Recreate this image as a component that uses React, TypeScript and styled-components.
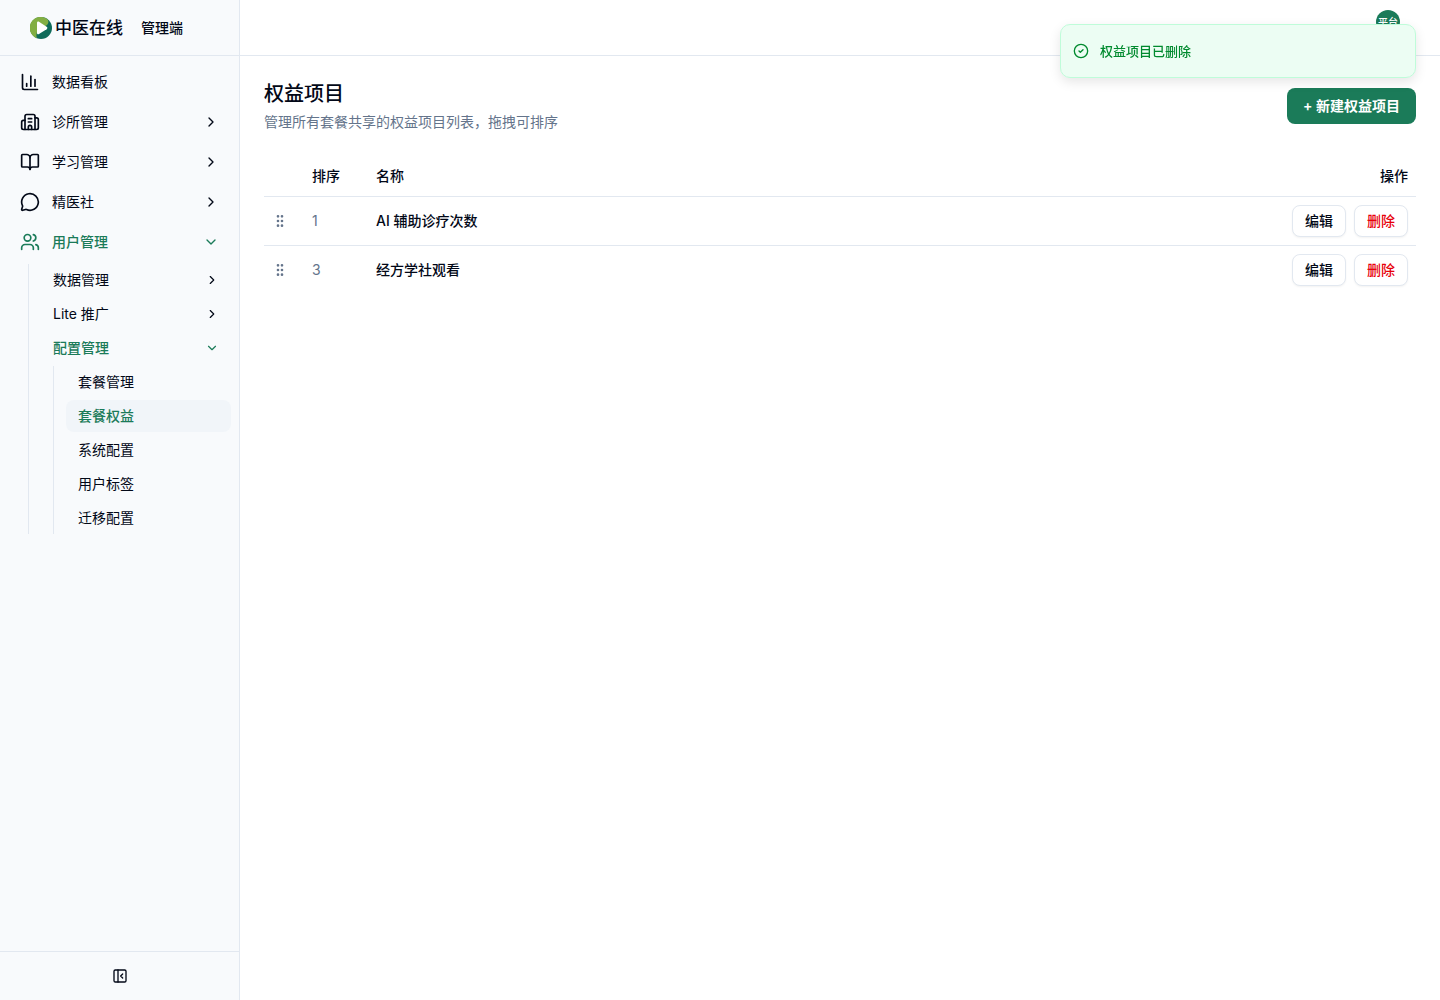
import React from "react";
import styled, { createGlobalStyle, css } from "styled-components";
import {
  BookOpen,
  Building2,
  ChartColumn,
  ChevronDown,
  ChevronRight,
  CircleCheck,
  GripVertical,
  MessageCircle,
  PanelLeftClose,
  Users,
} from "lucide-react";

const color = {
  text: "#020817",
  muted: "#64748b",
  border: "#e2e8f0",
  sidebar: "#f8fafc",
  active: "#f1f5f9",
  primary: "#1b7b59",
  danger: "#e7000b",
};

const GlobalStyle = createGlobalStyle`
  *, *::before, *::after { box-sizing: border-box; }
  body {
    margin: 0;
    background: #fff;
    color: ${color.text};
    font-family: Inter, "Noto Sans CJK SC", sans-serif;
    font-size: 14px;
    line-height: 20px;
    -webkit-font-smoothing: antialiased;
  }
  button { font: inherit; color: inherit; cursor: pointer; }
  a { color: inherit; text-decoration: none; }
  h1, p, ul { margin: 0; padding: 0; }
  ul { list-style: none; }
`;

const Shell = styled.div`
  display: flex;
  min-height: 100vh;
`;

const Sidebar = styled.aside`
  display: flex;
  flex-direction: column;
  flex: 0 0 240px;
  background: ${color.sidebar};
  border-right: 1px solid ${color.border};
`;

const Brand = styled.div`
  display: flex;
  align-items: center;
  gap: 18px;
  height: 56px;
  padding: 0 30px;
  border-bottom: 1px solid ${color.border};
  font-weight: 500;
`;

const Logo = styled.a`
  display: flex;
  align-items: center;
  gap: 3px;
  font-size: 17px;
  font-weight: 500;
`;

const Nav = styled.nav`
  flex: 1;
  padding: 8px;
`;

const Menu = styled.ul<{ $level: 1 | 2 | 3 }>`
  display: flex;
  flex-direction: column;
  gap: ${(p) => (p.$level === 1 ? 4 : 2)}px;
  ${(p) =>
    p.$level > 1 &&
    css`
      margin-top: ${p.$level === 2 ? 4 : 2}px;
      margin-left: ${p.$level === 2 ? 20 : 12}px;
      padding-left: 12px;
      border-left: 1px solid ${color.border};
    `}
`;

const itemStyle = css<{ $top?: boolean; $active?: boolean }>`
  display: flex;
  align-items: center;
  gap: 12px;
  width: 100%;
  height: ${(p) => (p.$top ? 36 : 32)}px;
  padding: 0 12px;
  border: 0;
  border-radius: 8px;
  background: none;
  text-align: left;
  font-weight: ${(p) => (p.$active ? 500 : 400)};
  color: ${(p) => (p.$active ? color.primary : color.text)};
`;

const MenuButton = styled.button`
  ${itemStyle}
`;

const MenuLink = styled.a<{ $selected?: boolean }>`
  ${itemStyle}
  ${(p) => p.$selected && `background: ${color.active};`}
`;

const Label = styled.span`
  flex: 1;
`;

const SidebarFooter = styled.div`
  display: flex;
  align-items: center;
  justify-content: center;
  height: 49px;
  border-top: 1px solid ${color.border};
`;

const IconButton = styled.button`
  display: flex;
  padding: 8px;
  border: 0;
  background: none;
`;

const Page = styled.div`
  flex: 1;
  min-width: 0;
`;

const TopBar = styled.header`
  display: flex;
  align-items: flex-start;
  justify-content: flex-end;
  height: 56px;
  padding: 10px 40px;
  border-bottom: 1px solid ${color.border};
`;

const Avatar = styled.button`
  width: 24px;
  height: 24px;
  padding: 0;
  border: 0;
  border-radius: 50%;
  background: ${color.primary};
  && { color: #fff; }
  font-size: 10px;
  font-weight: 500;
  line-height: 24px;
  white-space: nowrap;
`;

const Content = styled.main`
  display: flex;
  flex-direction: column;
  gap: 24px;
  padding: 24px;
`;

const Heading = styled.div`
  display: flex;
  align-items: center;
  justify-content: space-between;
`;

const Title = styled.h1`
  font-size: 20px;
  line-height: 28px;
  font-weight: 500;
`;

const Description = styled.p`
  margin-top: 4px;
  color: ${color.muted};
`;

const PrimaryButton = styled.button`
  height: 36px;
  padding: 0 16px;
  border: 0;
  border-radius: 8px;
  background: ${color.primary};
  && { color: #fff; }
  font-weight: 600;
`;

const Table = styled.table`
  width: 100%;
  border-collapse: separate;
  border-spacing: 0;
  table-layout: fixed;
`;

const HeadCell = styled.th<{ $width?: number; $right?: boolean }>`
  width: ${(p) => (p.$width ? `${p.$width}px` : "auto")};
  height: 41px;
  padding: 0 8px;
  border-bottom: 1px solid ${color.border};
  font-weight: 500;
  text-align: ${(p) => (p.$right ? "right" : "left")};
`;

const Row = styled.tr`
  &:not(:last-child) > td { border-bottom: 1px solid ${color.border}; }
`;

const Cell = styled.td<{ $muted?: boolean }>`
  padding: 8px;
  font-weight: ${(p) => (p.$muted ? 400 : 500)};
  color: ${(p) => (p.$muted ? color.muted : color.text)};

  & > svg { display: block; }
`;

const Actions = styled.div`
  display: flex;
  justify-content: flex-end;
  gap: 8px;
`;

const OutlineButton = styled.button<{ $danger?: boolean }>`
  height: 32px;
  padding: 0 12px;
  border: 1px solid ${color.border};
  border-radius: 8px;
  background: #fff;
  box-shadow: 0 1px 2px rgba(0, 0, 0, 0.05);
  font-weight: 500;
  && { color: ${(p) => (p.$danger ? color.danger : color.text)}; }
`;

const Toast = styled.div`
  position: fixed;
  top: 24px;
  right: 24px;
  display: flex;
  align-items: center;
  gap: 11px;
  width: 356px;
  padding: 16px 12px;
  border: 1px solid hsl(145, 92%, 87%);
  border-radius: 10px;
  background: hsl(143, 85%, 96%);
  box-shadow: 0 4px 12px rgba(0, 0, 0, 0.1);
  color: hsl(140, 100%, 27%);
  font-size: 13px;
  font-weight: 500;
`;

function BrandMark() {
  return (
    <svg width="22" height="22" viewBox="0 0 22 22" aria-hidden="true">
      <circle cx="11" cy="11" r="11" fill="#0f6b5a" />
      <path d="M17.5 2.2A11 11 0 1 0 7 21.200C6 19.500 6.500 17 7 15L17 8c1.500-1.500 2-3.800.5-5.800z" fill="#82ae43" />
      <path d="M7 6c0-1.300 1-1.800 2-1.200l7.600 5c1 .7 1 1.700 0 2.400L9 17c-1 .6-2 .1-2-1z" fill="#fff" />
    </svg>
  );
}

const topItems = [
  { label: "诊所管理", Icon: Building2 },
  { label: "学习管理", Icon: BookOpen },
  { label: "精医社", Icon: MessageCircle },
];

const configItems = ["套餐管理", "套餐权益", "系统配置", "用户标签", "迁移配置"];

const benefits = [
  { order: 1, name: "AI 辅助诊疗次数" },
  { order: 3, name: "经方学社观看" },
];

export default function App() {
  return (
    <>
      <GlobalStyle />
      <Shell>
        <Sidebar>
          <Brand>
            <Logo href="#">
              <BrandMark />
              中医在线
            </Logo>
            <span>管理端</span>
          </Brand>
          <Nav>
            <Menu $level={1}>
              <li>
                <MenuLink href="#" $top>
                  <ChartColumn size={20} />
                  <Label>数据看板</Label>
                </MenuLink>
              </li>
              {topItems.map(({ label, Icon }) => (
                <li key={label}>
                  <MenuButton type="button" $top>
                    <Icon size={20} />
                    <Label>{label}</Label>
                    <ChevronRight size={16} />
                  </MenuButton>
                </li>
              ))}
              <li>
                <MenuButton type="button" $top $active aria-expanded="true">
                  <Users size={20} />
                  <Label>用户管理</Label>
                  <ChevronDown size={16} />
                </MenuButton>
                <Menu $level={2}>
                  {["数据管理", "Lite 推广"].map((label) => (
                    <li key={label}>
                      <MenuButton type="button">
                        <Label>{label}</Label>
                        <ChevronRight size={14} />
                      </MenuButton>
                    </li>
                  ))}
                  <li>
                    <MenuButton type="button" $active aria-expanded="true">
                      <Label>配置管理</Label>
                      <ChevronDown size={14} />
                    </MenuButton>
                    <Menu $level={3}>
                      {configItems.map((label) => {
                        const selected = label === "套餐权益";
                        return (
                          <li key={label}>
                            <MenuLink href="#" $active={selected} $selected={selected}>
                              {label}
                            </MenuLink>
                          </li>
                        );
                      })}
                    </Menu>
                  </li>
                </Menu>
              </li>
            </Menu>
          </Nav>
          <SidebarFooter>
            <IconButton type="button" aria-label="收起侧边栏">
              <PanelLeftClose size={16} />
            </IconButton>
          </SidebarFooter>
        </Sidebar>
        <Page>
          <TopBar>
            <Avatar type="button">平台</Avatar>
          </TopBar>
          <Content>
            <Heading>
              <div>
                <Title>权益项目</Title>
                <Description>管理所有套餐共享的权益项目列表，拖拽可排序</Description>
              </div>
              <PrimaryButton type="button">+ 新建权益项目</PrimaryButton>
            </Heading>
            <Table>
              <thead>
                <tr>
                  <HeadCell $width={40} />
                  <HeadCell $width={64}>排序</HeadCell>
                  <HeadCell>名称</HeadCell>
                  <HeadCell $width={160} $right>操作</HeadCell>
                </tr>
              </thead>
              <tbody>
                {benefits.map((b) => (
                  <Row key={b.order}>
                    <Cell $muted><GripVertical size={16} /></Cell>
                    <Cell $muted>{b.order}</Cell>
                    <Cell>{b.name}</Cell>
                    <Cell>
                      <Actions>
                        <OutlineButton type="button">编辑</OutlineButton>
                        <OutlineButton type="button" $danger>删除</OutlineButton>
                      </Actions>
                    </Cell>
                  </Row>
                ))}
              </tbody>
            </Table>
          </Content>
        </Page>
      </Shell>
      <Toast role="status">
        <CircleCheck size={16} strokeWidth={2} />
        权益项目已删除
      </Toast>
    </>
  );
}
